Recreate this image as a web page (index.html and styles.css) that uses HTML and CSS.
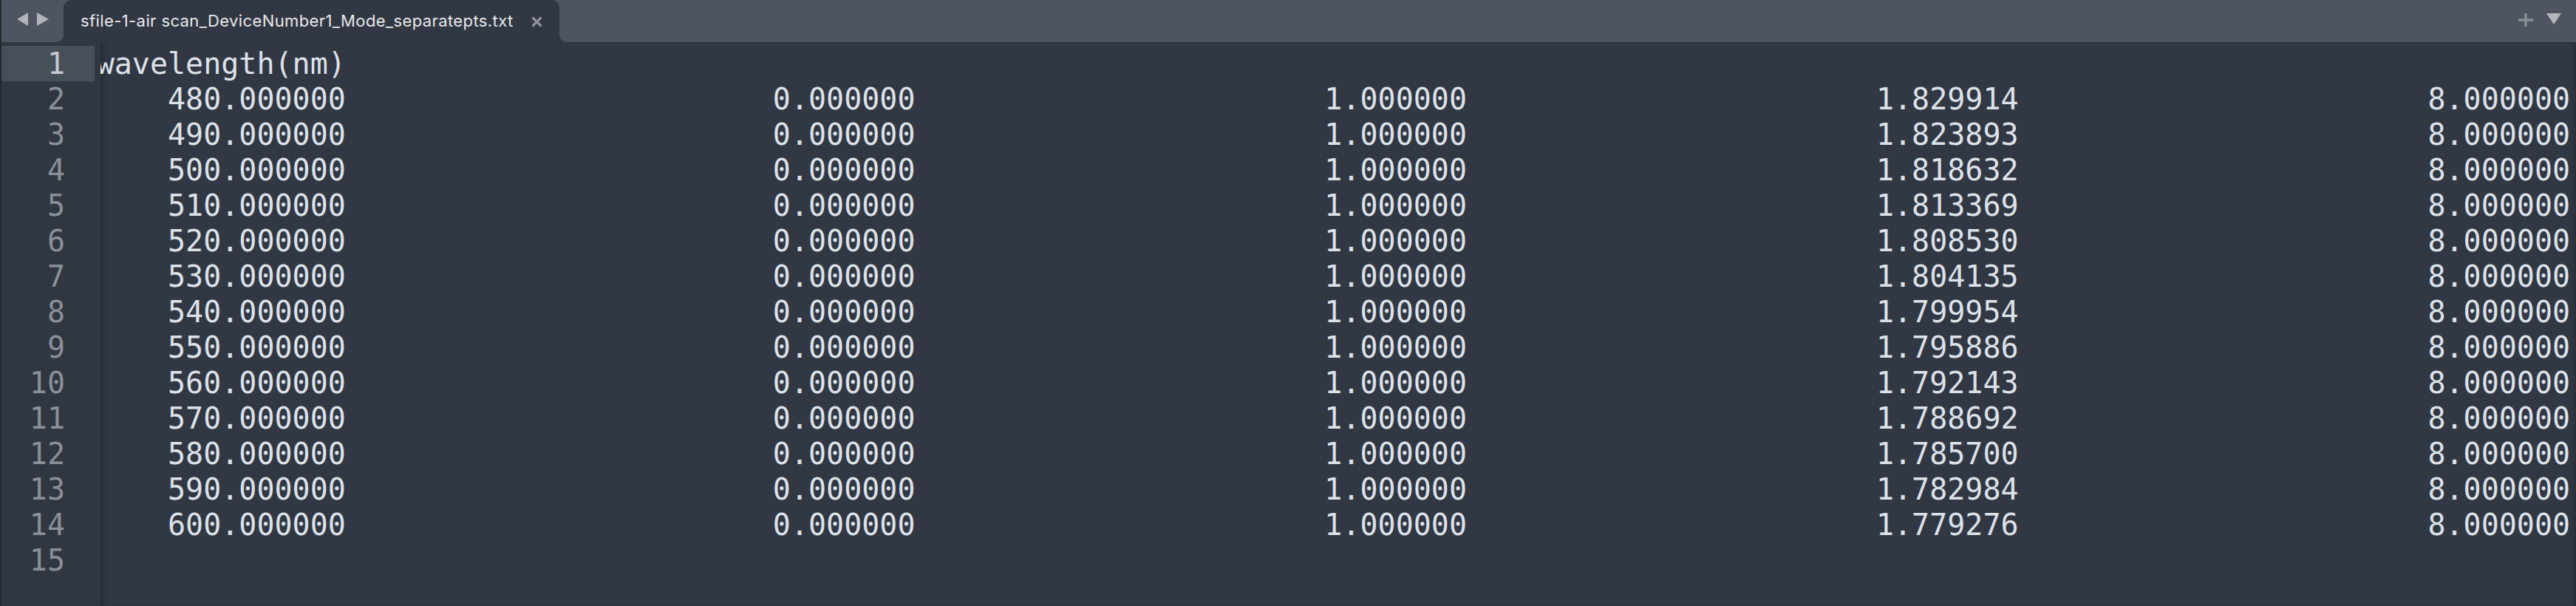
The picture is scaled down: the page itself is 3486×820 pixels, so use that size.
FILE: index.html
```html
<!DOCTYPE html>
<html>
<head>
<meta charset="utf-8">
<link rel="stylesheet" href="styles.css">
</head>
<body>
<div class="window">
  <div class="tabbar">
    <div class="tabbar-left">
      <svg class="nav" width="44" height="18" viewBox="0 0 44 18">
        <polygon points="15,0 15,18 0,9" fill="#b1b4b9"/>
        <polygon points="27,0 27,18 43,9" fill="#b1b4b9"/>
      </svg>
    </div>
    <div class="tab">
      <span class="tab-title">sfile-1-air scan_DeviceNumber1_Mode_separatepts.txt</span>
      <svg class="tab-close" width="15" height="15" viewBox="0 0 15 15">
        <path d="M1.5 1.5 L13.5 13.5 M13.5 1.5 L1.5 13.5" stroke="#8e9297" stroke-width="3.2" stroke-linecap="butt"/>
      </svg>
    </div>
    <div class="tabbar-right">
      <svg class="plus" width="20" height="18" viewBox="0 0 20 18">
        <path d="M10 0 V18 M0 9 H20" stroke="#8a8f96" stroke-width="3.4"/>
      </svg>
      <svg class="more" width="20" height="15" viewBox="0 0 20 15">
        <polygon points="0,0 20,0 10,15" fill="#b4b6ba"/>
      </svg>
    </div>
  </div>
  <div class="editor">
    <div class="gutter">
      <div class="ln active">1</div>
      <div class="ln">2</div>
      <div class="ln">3</div>
      <div class="ln">4</div>
      <div class="ln">5</div>
      <div class="ln">6</div>
      <div class="ln">7</div>
      <div class="ln">8</div>
      <div class="ln">9</div>
      <div class="ln">10</div>
      <div class="ln">11</div>
      <div class="ln">12</div>
      <div class="ln">13</div>
      <div class="ln">14</div>
      <div class="ln">15</div>
    </div>
    <div class="content">
<pre class="code">wavelength(nm)
    480.000000                        0.000000                       1.000000                       1.829914                       8.000000
    490.000000                        0.000000                       1.000000                       1.823893                       8.000000
    500.000000                        0.000000                       1.000000                       1.818632                       8.000000
    510.000000                        0.000000                       1.000000                       1.813369                       8.000000
    520.000000                        0.000000                       1.000000                       1.808530                       8.000000
    530.000000                        0.000000                       1.000000                       1.804135                       8.000000
    540.000000                        0.000000                       1.000000                       1.799954                       8.000000
    550.000000                        0.000000                       1.000000                       1.795886                       8.000000
    560.000000                        0.000000                       1.000000                       1.792143                       8.000000
    570.000000                        0.000000                       1.000000                       1.788692                       8.000000
    580.000000                        0.000000                       1.000000                       1.785700                       8.000000
    590.000000                        0.000000                       1.000000                       1.782984                       8.000000
    600.000000                        0.000000                       1.000000                       1.779276                       8.000000
</pre>
    </div>
  </div>
</div>
</body>
</html>
```

FILE: styles.css
```css
html, body {
  margin: 0;
  padding: 0;
  background: #323843;
}

.window {
  width: 3486px;
  height: 820px;
  display: flex;
  flex-direction: column;
  border-left: 2px solid #24282e;
  box-sizing: border-box;
  overflow: hidden;
  background: #323843;
}

.tabbar {
  height: 57px;
  flex: none;
  display: flex;
  background: linear-gradient(#4e5560 50%, #323843 50%);
}

.tabbar-left {
  width: 84px;
  flex: none;
  background: #4e5560;
  border-bottom-right-radius: 10px;
  display: flex;
  align-items: flex-start;
  padding: 17px 0 0 21px;
  box-sizing: border-box;
}

.tab {
  width: 671px;
  flex: none;
  background: #323843;
  border-top-left-radius: 10px;
  border-top-right-radius: 10px;
  display: flex;
  align-items: flex-start;
  justify-content: space-between;
  padding: 0 23px 0 23px;
  box-sizing: border-box;
}

.tab-title {
  font-family: Inter, "Noto Sans", sans-serif;
  font-size: 22px;
  line-height: 26px;
  margin-top: 15px;
  color: #e8e9eb;
  white-space: nowrap;
  letter-spacing: 0.4px;
}

.tab-close {
  margin-top: 22px;
}

.tabbar-right {
  flex: 1;
  background: #4e5560;
  border-bottom-left-radius: 10px;
  display: flex;
  justify-content: flex-end;
  align-items: flex-start;
  padding: 18px 20px 0 0;
  gap: 18px;
}

.editor {
  flex: 1;
  display: flex;
  min-height: 0;
}

.gutter {
  width: 134px;
  flex: none;
  background: #313741;
  padding-top: 5px;
  box-sizing: border-box;
}

.ln {
  width: 126px;
  height: 48px;
  box-sizing: border-box;
  padding-right: 40px;
  text-align: right;
  font-family: "DejaVu Sans Mono", monospace;
  font-size: 40px;
  line-height: 48px;
  color: #8a9099;
}

.ln.active {
  background: #474f59;
  color: #c3c8d0;
}

.content {
  flex: 1;
  min-width: 0;
  overflow: hidden;
  padding-top: 5px;
  box-shadow: inset 9px 0 7px -5px rgba(20, 23, 28, 0.35), inset -8px 0 6px -6px rgba(20, 23, 28, 0.35);
}

.code {
  margin: 0 0 0 -5.3px;
  font-family: "DejaVu Sans Mono", monospace;
  font-size: 40px;
  line-height: 48px;
  color: #dde2ea;
  white-space: pre;
}
```
